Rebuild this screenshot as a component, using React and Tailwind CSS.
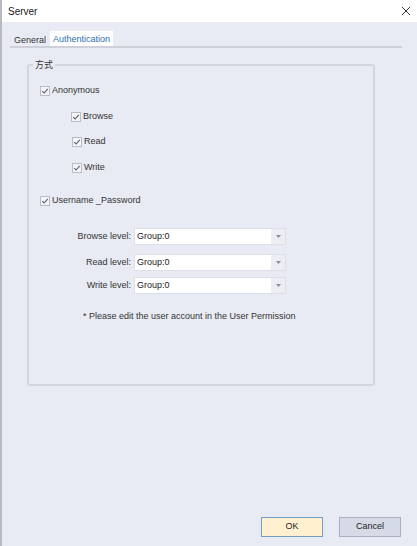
import React from "react";

const Check = ({ className = "" }) => (
  <span
    className={`flex items-center justify-center w-[10px] h-[10px] border border-[#b8bcc8] bg-[#f4f5f9] ${className}`}
  >
    <svg width="8" height="8" viewBox="0 0 8 8" fill="none">
      <path d="M1.2 4.2 L3.1 6 L6.8 1.8" stroke="#5b5f6a" strokeWidth="1.1" />
    </svg>
  </span>
);

const CheckRow = ({ label, className = "" }) => (
  <div className={`flex items-center h-[14px] gap-[2px] ${className}`}>
    <Check />
    <span>{label}</span>
  </div>
);

const LevelRow = ({ label, className = "" }) => (
  <div className={`flex items-center h-[17px] ${className}`}>
    <span className="w-[105px] text-right pr-[3px]">{label}</span>
    <div className="flex w-[152px] h-[17px] border border-[#dcdfe7] bg-[#eceef3]">
      <div className="flex-1 bg-white flex items-center pl-[2px] text-[#222]">Group:0</div>
      <div className="w-[14px] flex items-center justify-center">
        <svg width="5" height="4" viewBox="0 0 5 4">
          <path d="M0 0 H5 L2.5 3 Z" fill="#8a8e98" />
        </svg>
      </div>
    </div>
  </div>
);

export default function App() {
  return (
    <div
      className="w-[417px] h-[546px] flex flex-col border-l-2 border-[#b7bac3] text-[9px] text-[#333] overflow-hidden"
      style={{ fontFamily: '"Liberation Sans", "Noto Sans CJK SC", sans-serif' }}
    >
      <div className="h-[22px] bg-white flex items-center justify-between pl-[6px] pr-[6px] shrink-0">
        <span className="text-[10px] text-[#222]">Server</span>
        <svg width="10" height="10" viewBox="0 0 10 10">
          <path d="M1 1 L9 9 M9 1 L1 9" stroke="#333" strokeWidth="1" />
        </svg>
      </div>

      <div className="flex-1 flex flex-col bg-[#e9ebf4]">
        <div className="mt-[10px] ml-[8px] mr-[15px] flex items-end h-[16px] border-b-2 border-[#cdd0da]">
          <span className="px-[4px] h-[14px] flex items-end leading-[12px] text-[#333]">General</span>
          <span className="px-[3px] h-[15px] flex items-end leading-[13px] bg-white text-[#2f6fad]">
            Authentication
          </span>
        </div>

        <div className="relative ml-[25px] mt-[16px] w-[348px] h-[322px] border-2 border-[#d3d6df] rounded-[3px] flex flex-col">
          <span className="absolute -top-[7px] left-[4px] px-[2px] bg-[#e9ebf4] leading-[12px]">方式</span>

          <CheckRow label="Anonymous" className="mt-[18px] ml-[11px]" />
          <CheckRow label="Browse" className="mt-[12px] ml-[42px]" />
          <CheckRow label="Read" className="mt-[11px] ml-[43px]" />
          <CheckRow label="Write" className="mt-[12px] ml-[43px]" />
          <CheckRow label="Username _Password" className="mt-[19px] ml-[11px]" />

          <LevelRow label="Browse level:" className="mt-[20px]" />
          <LevelRow label="Read level:" className="mt-[9px]" />
          <LevelRow label="Write level:" className="mt-[6px]" />

          <div className="mt-[16px] ml-[54px] h-[14px] flex items-center">
            * Please edit the user account in the User Permission
          </div>
        </div>

        <div className="flex-1" />

        <div className="flex justify-end gap-[16px] pr-[16px] pb-[9px]">
          <button className="w-[62px] h-[20px] bg-[#fff1cf] border border-[#6f9ec8] text-[#222]">OK</button>
          <button className="w-[62px] h-[20px] bg-[#d6dae6] border border-[#a9afc0] text-[#222]">Cancel</button>
        </div>
      </div>
    </div>
  );
}
